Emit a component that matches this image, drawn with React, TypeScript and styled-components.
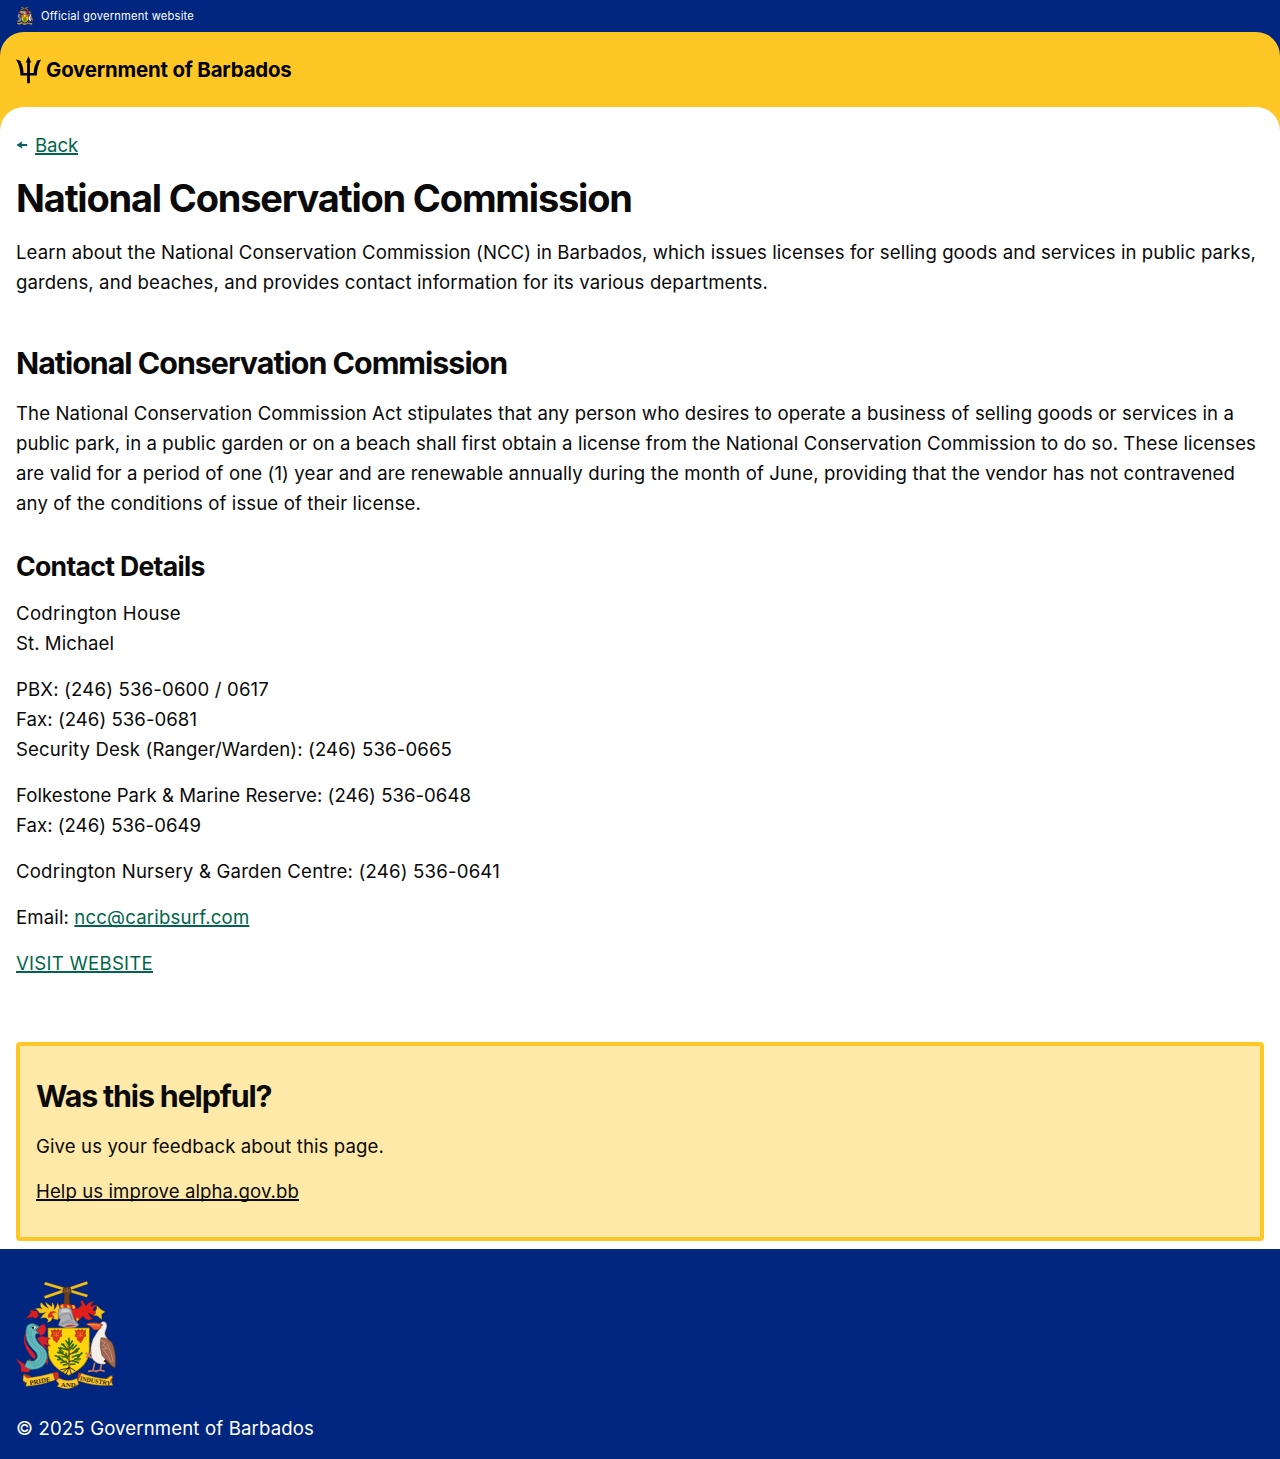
import React from "react";
import styled, { createGlobalStyle } from "styled-components";

const color = {
  blue: "#00267f",
  yellow: "#ffc726",
  paleYellow: "#ffe9a8",
  green: "#00654a",
  teal: "#0e5f64",
  ink: "#0a0a0a",
};

const GlobalStyle = createGlobalStyle`
  *, *::before, *::after { box-sizing: border-box; }
  body {
    margin: 0;
    background: #fff;
    color: ${color.ink};
    font-family: Inter, "Liberation Sans", sans-serif;
    font-size: 18.6px;
    line-height: 30px;
  }
  h1, h2, h3, p { margin: 0; }
`;

const TopBar = styled.div`
  display: flex;
  align-items: center;
  gap: 8px;
  height: 32px;
  padding: 0 16px;
  background: ${color.blue};
  color: #fff;
  font-size: 11.16px;
  line-height: 16px;
  letter-spacing: 0.199px;
`;

const HeaderBackdrop = styled.div`
  background: ${color.blue};
`;

const Header = styled.header`
  display: flex;
  align-items: center;
  gap: 4px;
  height: 75px;
  padding: 0 16px;
  background: ${color.yellow};
  border-radius: 24px 24px 0 0;
`;

const Brand = styled.span`
  color: #000;
  font-size: 20.46px;
  font-weight: 700;
  letter-spacing: -0.2px;
`;

const MainBackdrop = styled.div`
  background: ${color.yellow};
`;

const Main = styled.main`
  display: flex;
  flex-direction: column;
  padding: 23px 16px 8px;
  background: #fff;
  border-radius: 24px 24px 0 0;
`;

const BackRow = styled.div`
  display: flex;
  align-items: center;
  gap: 7px;
`;

const Link = styled.a<{ $dark?: boolean; $track?: number }>`
  color: ${(p) => (p.$dark ? color.ink : color.green)};
  letter-spacing: ${(p) => p.$track ?? 0.1}px;
  text-decoration: underline;
  text-decoration-thickness: 2px;
  text-decoration-skip-ink: none;
  text-underline-offset: 1.4px;
`;

const PageTitle = styled.h1`
  margin: 15px 0 16px;
  font-size: 38px;
  font-weight: 700;
  line-height: 46px;
  letter-spacing: -1.2px;
`;

const SectionTitle = styled.h2<{ $track: number }>`
  font-size: 30.4px;
  font-weight: 700;
  line-height: 38px;
  letter-spacing: ${(p) => p.$track}px;
`;

const SubTitle = styled.h3`
  margin-top: 32px;
  font-size: 26.6px;
  font-weight: 700;
  line-height: 32px;
  letter-spacing: -0.7px;
`;

const Section = styled.section`
  margin-top: 47px;
`;

const Paragraph = styled.p`
  margin-top: 16px;
`;

const Lead = styled.p``;

const Line = styled.span<{ $track: number }>`
  display: block;
  white-space: nowrap;
  letter-spacing: ${(p) => p.$track}px;
`;

const EmailLabel = styled.span`
  letter-spacing: 0.12px;
`;

const Feedback = styled.aside`
  margin-top: 64px;
  padding: 31px 16px;
  background: ${color.paleYellow};
  border: 4px solid ${color.yellow};
  border-radius: 4px;
`;

const FeedbackLink = styled.p`
  margin-top: 15px;
`;

const Footer = styled.footer`
  display: flex;
  flex-direction: column;
  align-items: flex-start;
  gap: 24px;
  height: 210px;
  padding: 32px 16px 16px;
  background: ${color.blue};
  color: #fff;
`;

const Trident = () => (
  <svg width="26" height="28" viewBox="0 0 26 28" fill="#000" aria-hidden="true">
    <path d="M12.5 0.3 L15.3 6.8 L13.9 6.3 V17 H17.7 C17.8 12.2 19.1 7.8 21.4 5.2 L19.5 5.6 C21.4 4.5 23.2 3.9 25.2 3.6 C22.7 7.6 21 13 20.8 19.6 H13.9 V27.2 H11.1 V19.6 H4.5 C4.3 13 2.6 7.6 0 3.6 C1.9 3.9 3.9 4.5 5.8 5.6 L4.2 5.4 C6.5 8.2 7.5 12.4 7.5 17 H11.1 V6.3 L9.7 6.8 Z" />
  </svg>
);

const BackArrow = () => (
  <svg width="12" height="10" viewBox="0 0 12 10" fill={color.teal} aria-hidden="true">
    <path d="M0.4 5 L6.4 1.2 L5.6 4 H11.2 V6 H5.6 L6.4 8.8 Z" />
  </svg>
);

const Flower = ({ x }: { x: number }) => (
  <g transform={`translate(${x} 178)`} stroke="#9c2412" strokeWidth="1.2">
    <path d="M-16 4 L-9 7 L-6 1 L0 6 L6 1 L9 7 L16 3 L15 15 L17 23 L10 25 L8 33 L4 37 L1 43 L-5 36 L-10 33 L-9 26 L-17 23 L-13 15 Z" fill="#dc341b" />
    <path d="M-9 12 L-3 15 M9 12 L3 15 M0 12 V25 M-8 22 L-2 20 M8 22 L2 20" fill="none" stroke="#f39b1f" strokeWidth="2" />
  </g>
);

const Crest = ({ width, height }: { width: number; height: number }) => (
  <svg width={width} height={height} viewBox="48 35 300 324" role="img" aria-label="Coat of arms of Barbados">
    {/* crossed sugar canes held by the raised fist */}
    <path d="M134 84 L262 40 M134 42 L262 80" stroke="#8f6a14" strokeWidth="9.5" />
    <path d="M134 84 L262 40 M134 42 L262 80" stroke="#efbf20" strokeWidth="7" />
    <path d="M190 56 Q200 49 211 55 L214 69 L208 77 L211 110 H190 L193 76 L188 68 Z" fill="#68401f" stroke="#2f1c10" strokeWidth="1.5" />
    <path d="M194 59 L197 68 M201 56 L202 68 M207 59 L206 69" stroke="#a36f43" strokeWidth="2" />

    {/* mantling */}
    <g stroke="#51310c" strokeWidth="0.8">
      <path d="M112 126 L91 122 L92 132 L78 147 L98 143 L107 148 L116 139 Z" fill="#dd1d1b" />
      <path d="M155 112 Q143 103 136 98 Q138 108 145 117 Q133 111 123 99 Q117 110 127 119 Q115 113 106 119 Q115 122 117 130 Q126 134 137 129 Q126 137 121 148 Q135 142 142 149 Q147 155 140 160 Q155 158 157 146 Q166 153 174 151 L181 132 Q182 115 173 100 Q169 115 162 121 Q166 106 155 98 Q158 106 155 112 Z" fill="#f9c51d" />
      <path d="M150 129 Q160 123 169 129 Q158 129 156 136 Q162 138 163 146 Q152 141 145 145 Q143 135 150 129 Z" fill="#e32b1b" />
      <path d="M221 119 Q240 119 246 104 Q236 98 247 92 Q252 103 258 110 Q266 97 282 96 Q272 105 274 112 Q286 104 292 108 Q280 114 278 123 L291 126 L286 139 Q273 137 265 130 Q267 142 280 147 L267 153 Q253 148 249 139 Q243 149 232 155 L216 149 L211 124 Z" fill="#e11f1c" />
      <path d="M290 108 L302 120 L316 127 L305 135 L306 151 L291 139 L280 139 Q291 132 286 125 Q292 120 290 108 Z" fill="#f9c51d" />
      <path d="M229 142 L238 150 L229 159 Z" fill="#f8b51c" />
    </g>

    {/* wreath and helmet */}
    <path d="M177 110 L184 103 L223 107 L229 115 L220 120 L180 118 Z" fill="#e2271d" />
    <path d="M181 111 L188 105 L193 117 L185 119 Z M200 108 L207 108 L211 119 L203 118 Z M216 108 L223 108 L225 117 L219 119 Z" fill="#f5c01e" />
    <path d="M177 119 Q195 109 214 120 Q218 139 223 151 L237 166 Q226 178 202 178 L175 168 L181 151 Q170 139 177 119 Z" fill="#aeafb3" stroke="#5c5c62" strokeWidth="1.6" />
    <path d="M176 143 Q191 129 210 134 L216 151 Q200 152 185 166 M211 134 L215 149 M184 163 Q206 154 230 163" fill="none" stroke="#77787e" strokeWidth="1.8" />
    <path d="M184 122 Q195 116 207 121 L209 129 Q194 126 184 132 Z" fill="#cfcfd2" />
    <path d="M196 170 Q212 163 228 168 Q213 174 196 172 Z" fill="#c93425" />

    {/* shield */}
    <path d="M144 176 H268 V243 Q268 291 206 318 Q144 291 144 243 Z" fill="#ffd50b" stroke="#8b6a0c" strokeWidth="2" />
    <Flower x={169} />
    <Flower x={241} />

    {/* bearded fig tree */}
    <g fill="none" strokeLinecap="round">
      <path d="M207 215 V294 M207 284 Q188 275 174 263 M207 277 Q230 272 239 260 M207 262 Q187 256 178 244 M207 256 Q224 250 231 238 M207 242 Q193 234 190 224 M208 238 L220 225" stroke="#4a3b12" strokeWidth="3.5" />
      <path d="M206 294 L188 310 M206 296 L199 314 M208 294 L214 314 M209 294 L225 304 M205 297 L182 301" stroke="#352812" strokeWidth="3" />
      <g stroke="#286b20" strokeWidth="5">
        <path d="M207 207 V230 M198 215 L208 227 M217 215 L208 229 M185 224 L195 232 M192 238 L204 242 M220 225 L212 239 M229 228 L218 239 M176 236 L189 248 M173 249 L187 252 M166 259 L180 264 M173 271 L187 270 M183 280 L198 276 M187 262 L201 263 M217 263 L235 256 M217 252 L232 246 M237 237 L228 249 M246 251 L233 262 M241 269 L225 269 M235 280 L219 275 M198 252 L202 268 M181 235 L192 239 M212 285 L224 284 M190 287 L200 285" />
      </g>
      <path d="M199 223 L204 235 M214 230 L211 243 M181 244 L191 248 M178 258 L190 262 M226 257 L219 265 M228 273 L238 274" stroke="#67881d" strokeWidth="2.2" />
    </g>

    {/* dolphin supporter */}
    <g fill="#d81f2c" stroke="#8c1720" strokeWidth="1.2">
      <path d="M108 179 Q119 178 122 167 L134 165 L139 179 L133 193 L122 200 L116 190 L107 188 Z" />
      <path d="M111 206 L125 201 L151 207 L139 216 L151 231 L130 225 L147 244 Q123 231 111 206 Z" />
      <path d="M90 268 L74 285 L49 269 L63 291 L63 307 L84 309 Q91 302 101 294 L80 291 L97 278 Z" />
      <path d="M131 244 Q143 259 135 274 L142 288 Q150 264 131 244 Z" />
    </g>
    <path d="M78 182 Q80 160 102 163 L119 172 L107 183 L118 193 Q104 189 106 204 Q111 221 129 233 Q149 252 138 277 Q127 299 102 300 Q82 302 74 290 L82 273 Q104 280 111 266 Q116 252 97 238 Q73 214 78 182 Z" fill="#62b9ba" stroke="#226d79" strokeWidth="2" />
    <path d="M84 179 Q82 208 108 231 Q130 246 122 270 Q113 284 88 282 M94 184 Q89 200 101 217 M123 237 Q137 250 131 269 Q121 290 96 290" fill="none" stroke="#358392" strokeWidth="2.5" strokeDasharray="4 3" />
    <path d="M78 188 Q71 213 84 231 Q93 243 104 254 Q109 263 103 270 Q85 254 77 233 Q66 210 78 188 Z" fill="#d81f2c" stroke="#8c1720" strokeWidth="1" />
    <path d="M92 173 Q103 166 113 172 L104 180 Z" fill="#d9e5d0" stroke="#154c62" strokeWidth="1.5" />
    <circle cx="99" cy="175" r="3" fill="#101018" />

    {/* pelican supporter */}
    <path d="M276 243 L267 260 L257 250 M266 258 L259 266 M267 260 L276 267 M284 281 L279 304 L264 306 M279 303 L291 308 M304 285 L301 302 L285 306 M301 302 L314 306" fill="none" stroke="#c97960" strokeWidth="5" />
    <path d="M300 163 Q307 153 317 159 Q324 169 317 183 Q310 196 322 207 L331 248 L316 284 Q287 289 275 264 Q268 236 279 210 Q290 189 299 178 Z" fill="#f4f0e9" stroke="#8b7469" strokeWidth="1.5" />
    <path d="M303 205 Q328 204 338 225 Q350 253 345 296 Q331 288 324 278 L306 258 Q297 229 303 205 Z" fill="#a0664f" stroke="#563c32" strokeWidth="1.6" />
    <path d="M302 213 L317 220 L309 227 L322 237 L305 240 M321 223 Q334 248 340 278 M311 242 Q324 256 334 279" fill="none" stroke="#d0a084" strokeWidth="2.2" />
    <path d="M317 269 L341 298 L327 287 L310 276 Z" fill="#39251f" />
    <path d="M304 163 Q276 157 258 164 Q275 172 282 181 Q295 184 303 176 Z" fill="#e85327" stroke="#963419" strokeWidth="1.5" />
    <path d="M263 165 L300 168" stroke="#ffb05d" strokeWidth="2.5" />
    <circle cx="306" cy="167" r="2.2" fill="#15151b" />

    {/* motto ribbon */}
    <g stroke="#83560b" strokeWidth="1.2">
      <path d="M72 314 L92 321 L86 344 L71 338 Z M157 311 L174 308 L178 333 L165 329 Z M235 310 L252 315 L246 330 L233 332 Z M319 326 L337 318 L336 340 L324 347 Z" fill="#d92b1c" />
      <path d="M70 317 L82 326 Q121 322 158 311 L165 332 Q125 348 77 351 L80 340 L69 334 Z" fill="#fac92b" />
      <path d="M168 333 L178 327 Q205 340 231 327 L236 345 Q205 368 171 351 L177 344 Z" fill="#fac92b" />
      <path d="M244 312 Q281 326 321 329 L333 319 L338 324 L331 333 L339 348 Q287 352 234 334 Z" fill="#fac92b" />
    </g>
    <g fill="#302008" fontFamily="'Liberation Serif', serif" fontWeight="700" textAnchor="middle">
      <text x="120" y="342" fontSize="20" textLength="63" lengthAdjust="spacingAndGlyphs" transform="rotate(-10 120 337)">PRIDE</text>
      <text x="205" y="354" fontSize="18" textLength="45" lengthAdjust="spacingAndGlyphs">AND</text>
      <text x="286" y="341" fontSize="19" textLength="94" lengthAdjust="spacingAndGlyphs" transform="rotate(10 286 337)">INDUSTRY</text>
    </g>
  </svg>
);

type TextLine = [text: string, track: number];

const Lines = ({ items }: { items: TextLine[] }) => (
  <>
    {items.map(([text, track]) => (
      <Line key={text} $track={track}>
        {text}
      </Line>
    ))}
  </>
);

const leadLines: TextLine[] = [
  ["Learn about the National Conservation Commission (NCC) in Barbados, which issues licenses for selling goods and services in public parks,", 0.063],
  ["gardens, and beaches, and provides contact information for its various departments.", 0.108],
];

const actLines: TextLine[] = [
  ["The National Conservation Commission Act stipulates that any person who desires to operate a business of selling goods or services in a", 0.108],
  ["public park, in a public garden or on a beach shall first obtain a license from the National Conservation Commission to do so. These licenses", 0.068],
  ["are valid for a period of one (1) year and are renewable annually during the month of June, providing that the vendor has not contravened", 0.11],
  ["any of the conditions of issue of their license.", 0.115],
];

const contactBlocks: TextLine[][] = [
  [["Codrington House", 0.301], ["St. Michael", 0.064]],
  [
    ["PBX: (246) 536-0600 / 0617", 0.162],
    ["Fax: (246) 536-0681", 0.038],
    ["Security Desk (Ranger/Warden): (246) 536-0665", 0.119],
  ],
  [["Folkestone Park & Marine Reserve: (246) 536-0648", 0.025], ["Fax: (246) 536-0649", 0.013]],
  [["Codrington Nursery & Garden Centre: (246) 536-0641", 0.196]],
];

export default function App() {
  return (
    <>
      <GlobalStyle />
      <TopBar>
        <Crest width={17} height={18} />
        <span>Official government website</span>
      </TopBar>
      <HeaderBackdrop>
        <Header>
          <Trident />
          <Brand>Government of Barbados</Brand>
        </Header>
      </HeaderBackdrop>
      <MainBackdrop>
        <Main>
          <BackRow>
            <BackArrow />
            <Link $track={-0.108}>Back</Link>
          </BackRow>
          <PageTitle>National Conservation Commission</PageTitle>
          <Lead>
            <Lines items={leadLines} />
          </Lead>
          <Section>
            <SectionTitle $track={-1}>National Conservation Commission</SectionTitle>
            <Paragraph>
              <Lines items={actLines} />
            </Paragraph>
            <SubTitle>Contact Details</SubTitle>
            {contactBlocks.map((items) => (
              <Paragraph key={items[0][0]}>
                <Lines items={items} />
              </Paragraph>
            ))}
            <Paragraph>
              <EmailLabel>Email: </EmailLabel>
              <Link $track={0.179}>ncc@caribsurf.com</Link>
            </Paragraph>
            <Paragraph>
              <Link $track={0.251}>VISIT WEBSITE</Link>
            </Paragraph>
          </Section>
          <Feedback>
            <SectionTitle $track={-1.15}>Was this helpful?</SectionTitle>
            <Paragraph>
              <Line $track={0.105}>Give us your feedback about this page.</Line>
            </Paragraph>
            <FeedbackLink>
              <Link $dark $track={0.082}>
                Help us improve alpha.gov.bb
              </Link>
            </FeedbackLink>
          </Feedback>
        </Main>
      </MainBackdrop>
      <Footer>
        <Crest width={100} height={108} />
        <Line $track={0.139}>© 2025 Government of Barbados</Line>
      </Footer>
    </>
  );
}
